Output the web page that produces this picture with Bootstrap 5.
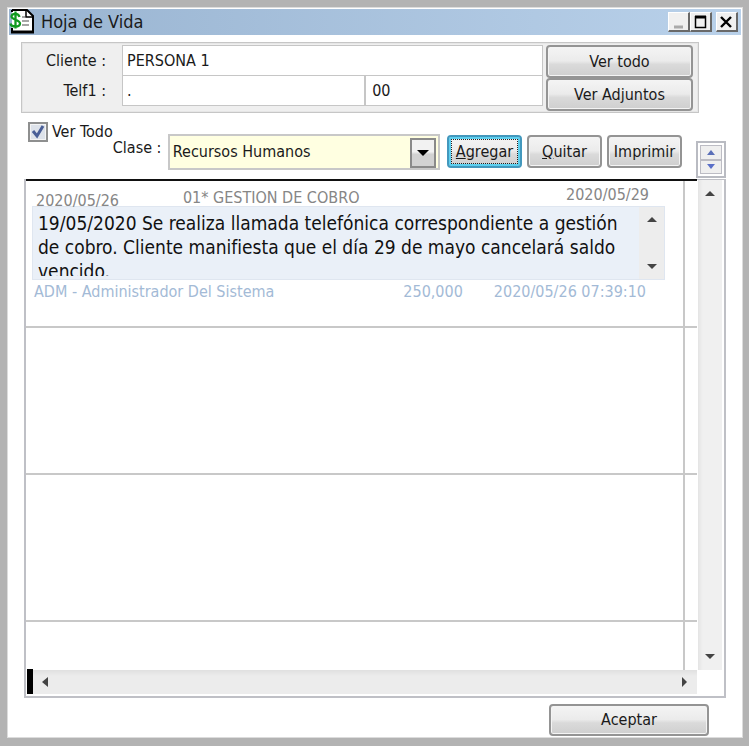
<!DOCTYPE html>
<html lang="es">
<head>
<meta charset="utf-8">
<meta name="viewport" content="width=device-width, initial-scale=1">
<title>Hoja de Vida</title>
<link href="https://cdn.jsdelivr.net/npm/bootstrap@5.3.0/dist/css/bootstrap.min.css" rel="stylesheet">
<style>
body { font-family: "DejaVu Sans Condensed", "Noto Sans", sans-serif; font-size: 16px; line-height: 20px; color: #1a1a1a; background: #b3b3b3; padding: 7px 6px 8px 7px; }
input, select, textarea, button { font-family: inherit; color: inherit; }
.app-window { background: #fff; border: 1px solid #dcdcdc; padding: 1px; min-height: 0; min-width: 0; }
.title-strip { height: 26px; flex: none; background: linear-gradient(90deg, #99b4d1, #b9d1ea); padding-right: 3px; }
.title-text { font-size: 18px; line-height: 26px; font-weight: 400; }
.cap-btn { width: 22px; height: 20px; background: #f0f0f0; border: 1px solid #fff; border-right: 2px solid #696969; border-bottom: 2px solid #696969; padding: 0; }
.client-panel { margin: 7px 42px 0 12px; border: 1px solid #c6c6c6; outline: 1px solid #e6e6e6; outline-offset: -2px; background: #efefef; padding: 2px 5px 1px 0; flex: none; }
.panel-labels { width: 100px; flex: none; line-height: 30px; padding: 1px 16px 0 0; text-align: right; }
.flat-field { height: 31px; border: 1px solid #c6c6c6; border-radius: 0; background: #fff; padding: 0 4px; min-width: 0; margin-bottom: -1px; }
.field-phone { width: 58%; flex: none; border-right-width: 2px; }
.field-ext { border-left: 0; padding-left: 6px; }
.win-btn { height: 33px; border: 2px solid #949494; border-radius: 4px; font-size: 16px; line-height: 20px; padding: 0; color: #1a1a1a; background: linear-gradient(#f4f4f4 0%, #ebebeb 48%, #dadada 60%, #cfcfcf 100%); box-shadow: inset 0 0 0 1px #f4f4f4; }
.side-buttons { width: 147px; flex: none; margin-left: 3px; }
.tool-row { margin: 9px 15px 0 19px; flex: none; }
.tick { appearance: none; width: 20px; height: 20px; border: 2px solid #8e8f8f; box-shadow: inset 0 0 0 1px #f4f4f4; background: #dde2ea; margin: 0; }
.tick-mark { left: 3px; top: 2px; pointer-events: none; }
.class-label { margin-top: 16px; width: 50px; }
.class-picker { height: 36px; margin: 12px 7px 0 5px; border: 2px solid #c8c8c8; background: #ffffe1; }
.class-picker select { appearance: none; border: 0; background: transparent; padding: 0 32px 0 3px; outline: 0; }
.drop-face { top: 2px; right: 2px; width: 26px; height: 30px; border: 2px solid #8a8a8a; background: linear-gradient(#f2f2f2 45%, #d2d2d2 55%); pointer-events: none; }
.tool-btns { gap: 5px; margin-top: 13px; }
.tool-btns .win-btn { width: 75px; }
.tool-btns .default-btn { border: 2px solid #4398bd; box-shadow: inset 0 0 0 2px #5ccfef; padding: 2px; }
.focus-dots { border: 1px dotted #222; line-height: 23px; height: 25px; }
.stepper { width: 30px; height: 37px; margin: 19px 0 0 14px; border: 2px solid #b9bbc2; padding: 2px; }
.stepper button { border: 1px solid #bcbcc4; background: #efefef; padding: 0; flex: 1; line-height: 0; }
.records { margin: 1px 15px 0 15px; border: 2px solid #bfc0c6; border-top-width: 1px; min-height: 0; display: grid; grid-template-columns: minmax(0,1fr) 27px; grid-template-rows: minmax(0,1fr) 26px; }
.record-area { border-top: 2px solid #111; margin-top: -1px; min-height: 0; }
.record { height: 147px; border-bottom: 2px solid #c8c8c8; flex: none; }
.record-main { border-right: 2px solid #c8c8c8; padding: 6px 18px 0 6px; margin-right: 12px; height: 147px; }
.record-head { color: #868686; height: 19px; padding: 0 16px 0 4px; }
.head-class { margin-left: 64px; line-height: 22px; }
.head-due { line-height: 16px; }
.note-box { height: 74px; background: #eaf0f8; border: 1px solid #dfe6f0; }
.note-box textarea { height: 65px; margin-top: 4px; border: 0; resize: none; overflow: hidden; background: transparent; font-size: 19px; line-height: 24px; padding: 0 0 0 5px; color: #111; outline: 0; white-space: pre; min-width: 0; }
.thin-bar { width: 25px; flex: none; background: #ededed; }
.record-foot { color: #a3bad6; padding: 2px 19px 0 2px; }
.foot-amount { margin-right: 31px; }
.v-bar { background: linear-gradient(90deg, #e4e4e4, #f0f0f0 20%, #f0f0f0); margin: 0 2px 0 1px; }
.h-bar { background: linear-gradient(#e0e0e0, #ececec 25%, #ececec); border-bottom: 2px solid #fff; }
.row-marker { width: 6px; background: #000; margin: -1px 0 0 1px; height: 25px; }
.accept-btn { flex: none; height: 32px; width: 160px; margin: 6px 32px 0 0; }
</style>
<script src="https://cdn.jsdelivr.net/npm/bootstrap@5.3.0/dist/js/bootstrap.bundle.min.js"></script>
</head>
<body class="vh-100 d-flex">
<main class="app-window flex-grow-1 d-flex flex-column">
  <header class="title-strip d-flex align-items-center">
    <svg width="24" height="26" viewBox="0 0 24 26" aria-hidden="true" class="ms-1 me-1 overflow-visible">
      <path d="M-1 1H14L20 7V22H-1Z" fill="#fff"/>
      <path d="M-1 1H14L20 7V22M-1 22V19M-1 1V3" fill="none" stroke="#000" stroke-width="2"/>
      <path d="M-2 23H21" stroke="#000" stroke-width="3"/>
      <path d="M13 2V8H20" fill="none" stroke="#000" stroke-width="1.5"/>
      <path d="M9 8H12M9 12H16M9 16H16" stroke="#888" stroke-width="1.5"/>
      <path d="M6.500 8C5.500 4-1.500 4-1.500 7.500S7 10.500 7 14.500S-2 18.500-2.500 14.500M2.500 2.500V19.500" fill="none" stroke="#109a20" stroke-width="2.300"/>
    </svg>
    <h1 class="title-text mb-0 flex-grow-1">Hoja de Vida</h1>
    <button class="cap-btn" aria-label="Minimizar"><svg width="18" height="16" class="d-block"><path d="M5 13H14" stroke="#aaa" stroke-width="3"/></svg></button>
    <button class="cap-btn" aria-label="Maximizar"><svg width="18" height="16" class="d-block"><path d="M4.500 2V13.500H14.500V2" fill="none" stroke="#000" stroke-width="1.500"/><path d="M4 3H15" stroke="#000" stroke-width="3"/></svg></button>
    <button class="cap-btn ms-1" aria-label="Cerrar"><svg width="18" height="16" class="d-block"><path d="M4 3L14 13M14 3L4 13" stroke="#000" stroke-width="2.400"/></svg></button>
  </header>

  <section class="client-panel d-flex">
    <div class="panel-labels d-flex flex-column">
      <label for="cliente">Cliente :</label>
      <label for="telf">Telf1 :</label>
    </div>
    <div class="flex-grow-1 d-flex flex-column">
      <input id="cliente" class="flat-field w-100" value="PERSONA 1">
      <div class="d-flex">
        <input id="telf" class="flat-field field-phone" value=".">
        <input class="flat-field field-ext flex-grow-1" aria-label="Telf2" value="00">
      </div>
    </div>
    <div class="side-buttons d-flex flex-column">
      <button class="win-btn">Ver todo</button>
      <button class="win-btn">Ver Adjuntos</button>
    </div>
  </section>

  <section class="tool-row d-flex align-items-start">
    <div class="d-flex align-items-center position-relative">
      <input type="checkbox" class="tick" id="vertodo" checked>
      <svg width="14" height="15" class="tick-mark position-absolute" aria-hidden="true"><path d="M2 7L6 12L12 2" fill="none" stroke="#4a5f97" stroke-width="3"/></svg>
      <label for="vertodo" class="ms-1 text-nowrap">Ver Todo</label>
    </div>
    <label for="clase" class="class-label text-nowrap">Clase :</label>
    <div class="class-picker flex-grow-1 position-relative">
      <select id="clase" class="w-100 h-100"><option>Recursos Humanos</option></select>
      <span class="drop-face position-absolute d-flex align-items-center justify-content-center"><svg width="12" height="6"><path d="M0 0H12L6 6Z" fill="#000"/></svg></span>
    </div>
    <div class="tool-btns d-flex">
      <button class="win-btn default-btn"><span class="focus-dots d-block"><u>A</u>gregar</span></button>
      <button class="win-btn"><u>Q</u>uitar</button>
      <button class="win-btn">Imprimir</button>
    </div>
    <div class="stepper d-flex flex-column">
      <button aria-label="Anterior"><svg width="8" height="5"><path d="M0 5L4 0L8 5Z" fill="#5a6fb8"/></svg></button>
      <button aria-label="Siguiente"><svg width="8" height="5"><path d="M0 0L4 5L8 0Z" fill="#5a6fc8"/></svg></button>
    </div>
  </section>

  <section class="records flex-grow-1">
    <div class="record-area overflow-hidden d-flex flex-column">
      <article class="record">
        <div class="record-main">
          <div class="record-head d-flex">
            <span class="mt-1">2020/05/26</span>
            <span class="head-class">01* GESTION DE COBRO</span>
            <span class="head-due ms-auto">2020/05/29</span>
          </div>
          <div class="note-box d-flex">
            <textarea class="flex-grow-1" aria-label="Detalle">19/05/2020 Se realiza llamada telefónica correspondiente a gestión
de cobro. Cliente manifiesta que el día 29 de mayo cancelará saldo
vencido.</textarea>
            <div class="thin-bar d-flex flex-column justify-content-between align-items-center py-2">
              <svg width="10" height="10"><path d="M0 7L5 2L10 7Z" fill="#444"/></svg>
              <svg width="10" height="10"><path d="M0 3L5 8L10 3Z" fill="#444"/></svg>
            </div>
          </div>
          <div class="record-foot d-flex">
            <span>ADM - Administrador Del Sistema</span>
            <span class="foot-amount ms-auto">250,000</span>
            <span>2020/05/26 07:39:10</span>
          </div>
        </div>
      </article>
      <article class="record"><div class="record-main"></div></article>
      <article class="record"><div class="record-main"></div></article>
      <article class="record border-bottom-0"><div class="record-main"></div></article>
    </div>
    <div class="v-bar d-flex flex-column justify-content-between align-items-center py-2">
      <svg width="10" height="10"><path d="M0 8L5 3L10 8Z" fill="#444"/></svg>
      <svg width="10" height="10"><path d="M0 2L5 7L10 2Z" fill="#444"/></svg>
    </div>
    <div class="d-flex">
      <span class="row-marker"></span>
      <div class="h-bar flex-grow-1 d-flex justify-content-between align-items-center px-2">
        <svg width="8" height="10"><path d="M7 0L1 5L7 10Z" fill="#444"/></svg>
        <svg width="8" height="10"><path d="M1 0L6 5L1 10Z" fill="#444"/></svg>
      </div>
    </div>
  </section>

  <button class="win-btn accept-btn align-self-end">Aceptar</button>
</main>
</body>
</html>
